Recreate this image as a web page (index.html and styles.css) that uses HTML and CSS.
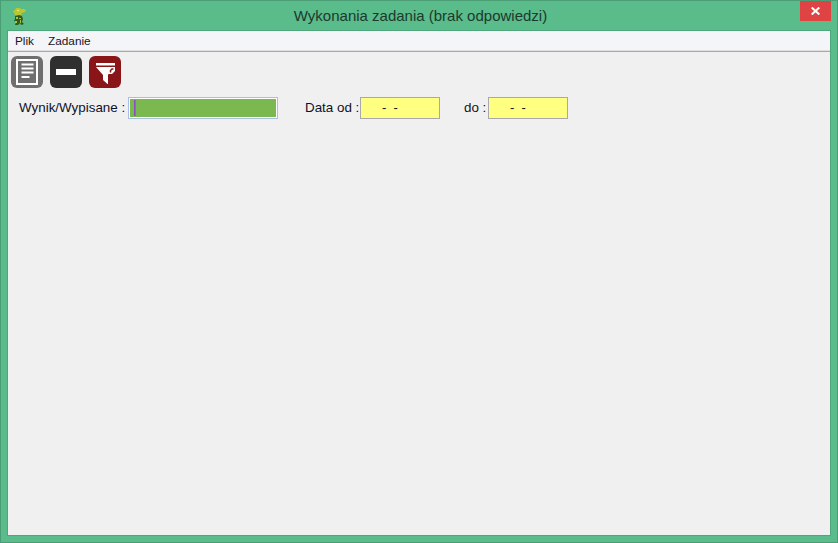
FILE: index.html
```html
<!DOCTYPE html>
<html lang="pl">
<head>
<meta charset="utf-8">
<title>Wykonania zadania (brak odpowiedzi)</title>
<link rel="stylesheet" href="styles.css">
</head>
<body>
<div class="window">
  <header class="titlebar">
    <svg class="app-icon" width="14" height="17" viewBox="0 0 14 17">
      <path d="M4 0h4l1 1h3l2 1-1 2-3 1H9l1 2-4 1-3-1-1-2-1-2 2-1z" fill="#b9c82e"/>
      <path d="M5 2h2v1H5z" fill="#e8ea7a"/>
      <path d="M3 8l4-1 3 1 1 3-1 3 2 2-3 1-1-2-2 2H3l1-3-2-1 1-2z" fill="#2f5a22"/>
      <path d="M4 9h2v2H4zM7 10h2v1H7zM3 13h2v2H3zM8 12h1v3H8z" fill="#a9c23a"/>
    </svg>
    <div class="title">Wykonania zadania (brak odpowiedzi)</div>
    <div class="close">
      <svg width="9" height="8" viewBox="0 0 9 8"><path d="M.7.5l7.600 7M8.300.5L.7 7.500" stroke="#fff" stroke-width="2"/></svg>
    </div>
  </header>
  <div class="client">
    <nav class="menu"><span>Plik</span><span>Zadanie</span></nav>
    <div class="toolbar">
      <button class="tool tool-gray">
        <svg width="32" height="32" viewBox="0 0 32 32"><path d="M6 4h20v24H6z" fill="none" stroke="#fff" stroke-width="2"/><path d="M10.500 8.500h12M10.500 12.500h12M10.500 16.500h12M10.500 21h8" stroke="#fff" stroke-width="2"/></svg>
      </button>
      <button class="tool tool-dark">
        <svg width="20" height="6" viewBox="0 0 20 6"><path d="M0 0h20v6H0z" fill="#fff"/></svg>
      </button>
      <button class="tool tool-red">
        <svg width="32" height="32" viewBox="0 0 32 32">
          <path d="M7 7h19v2.500H7z" fill="#fff"/>
          <path d="M7 11h19v4l-3 3h-3.500L19 19v9h-.5L14 24v-5z" fill="#fff"/>
          <path d="M21.500 16.500l0-2 1.500-1.500h1.500" fill="none" stroke="#8a1518" stroke-width="1.500"/>
        </svg>
      </button>
    </div>
    <form class="filters">
      <label class="lbl lbl-wynik">Wynik/Wypisane :</label>
      <div class="field field-green"><i class="caret"></i></div>
      <label class="lbl lbl-data">Data od :</label>
      <div class="field field-date">-  -</div>
      <label class="lbl lbl-do">do :</label>
      <div class="field field-date">-  -</div>
    </form>
  </div>
</div>
</body>
</html>
```
FILE: styles.css
```css
* { box-sizing: border-box; }
html, body { margin: 0; padding: 0; }
body {
  width: 838px;
  height: 543px;
  overflow: hidden;
  font-family: "Liberation Sans", Arial, sans-serif;
}
.window {
  width: 838px;
  height: 543px;
  display: flex;
  flex-direction: column;
  background: #5abb8b;
  border: 1px solid #4b9d75;
  padding: 0 6px 6px;
}
.titlebar {
  height: 29px;
  flex: none;
  display: flex;
  align-items: flex-start;
  position: relative;
}
.app-icon { margin: 7px 0 0 5px; flex: none; }
.title {
  position: absolute;
  left: 0;
  right: 0;
  top: 6px;
  text-align: center;
  font-size: 15px;
  line-height: 18px;
  color: #1c3a2c;
  padding-left: 3px;
}
.close {
  position: absolute;
  right: 0;
  top: 0;
  width: 31px;
  height: 20px;
  background: #e04343;
  display: flex;
  align-items: center;
  justify-content: center;
}
.client {
  flex: 1;
  background: #f0f0f0;
  display: flex;
  flex-direction: column;
  border: 1px solid #4fa67c;
}
.menu {
  height: 21px;
  flex: none;
  display: flex;
  background: #f4f5f8;
  border-bottom: 1px solid #a9a9a9;
  box-shadow: inset 0 -1px 0 #dedede;
  padding-left: 7px;
  gap: 14px;
  font-size: 11.8px;
  line-height: 20px;
  color: #14142a;
}
.toolbar {
  display: flex;
  gap: 7px;
  padding: 4px 0 0 3px;
}
.tool {
  width: 32px;
  height: 32px;
  padding: 0;
  border: 0;
  border-radius: 6px;
  display: flex;
  align-items: center;
  justify-content: center;
}
.tool-gray { background: #6f6f6f; }
.tool-dark { background: #2f2f2f; }
.tool-red { background: #8a1518; }
.filters {
  display: flex;
  align-items: center;
  margin: 9px 0 0 0;
  height: 22px;
  padding-left: 11px;
}
.lbl {
  font-size: 13.4px;
  line-height: 20px;
  color: #101028;
  white-space: nowrap;
}
.lbl-wynik { width: 109px; }
.lbl-data { width: 55px; margin-left: 27px; }
.lbl-do { width: 24px; margin-left: 24px; }
.field {
  height: 22px;
  border: 1px solid #a9a9ad;
  flex: none;
}
.field-green {
  width: 150px;
  background: #7cb850;
  border-color: #a8bfe2;
  box-shadow: inset 0 0 0 1px #fff;
  position: relative;
}
.caret {
  position: absolute;
  left: 5px;
  top: 2px;
  width: 1px;
  height: 16px;
  background: #8a4fc0;
  box-shadow: 1px 0 0 #8a6fa8;
}
.field-date {
  width: 80px;
  background: #ffff80;
  font-size: 13px;
  line-height: 20px;
  color: #101028;
  padding-left: 21px;
  white-space: pre;
}
```
